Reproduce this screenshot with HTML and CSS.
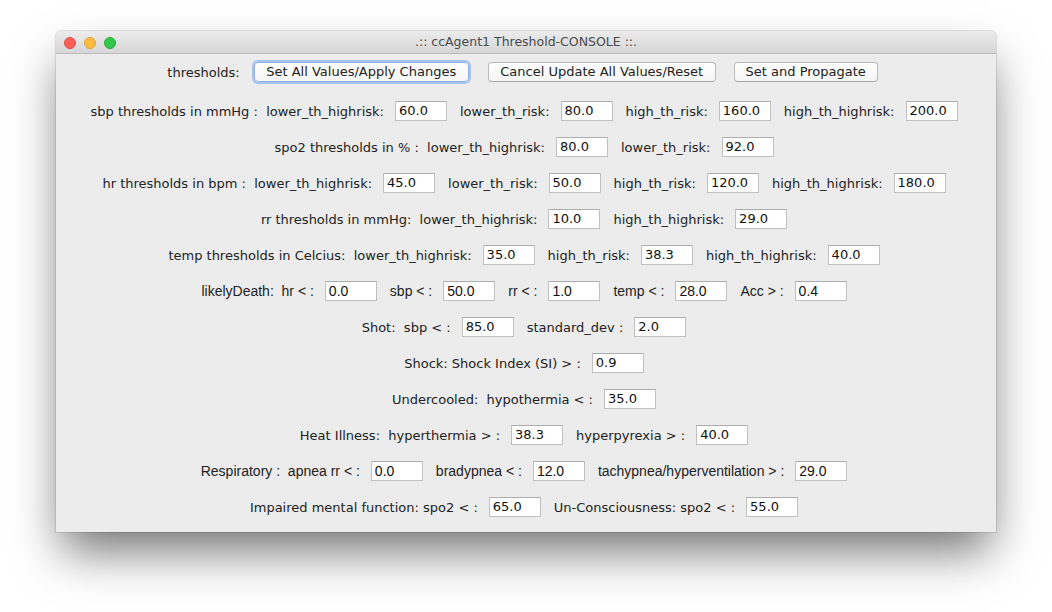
FILE: index.html
```html
<!DOCTYPE html>
<html>
<head>
<meta charset="utf-8">
<title>ccAgent1 Threshold-CONSOLE</title>
<link rel="stylesheet" href="styles.css">
</head>
<body>
<div class="window">
  <div class="titlebar">
    <div class="lights">
      <span class="light red"></span>
      <span class="light yellow"></span>
      <span class="light green"></span>
    </div>
    <div class="title">.:: ccAgent1 Threshold-CONSOLE ::.</div>
  </div>
  <div class="content">
    <div class="row first">
      <span class="lbl">thresholds:</span>
      <button class="btn focus b1">Set All Values/Apply Changes</button>
      <button class="btn b2">Cancel Update All Values/Reset</button>
      <button class="btn b3">Set and Propagate</button>
    </div>
    <div class="row">
      <span class="lbl">sbp thresholds in mmHg :  lower_th_highrisk:</span><span class="fld">60.0</span>
      <span class="lbl">lower_th_risk:</span><span class="fld">80.0</span>
      <span class="lbl">high_th_risk:</span><span class="fld">160.0</span>
      <span class="lbl">high_th_highrisk:</span><span class="fld">200.0</span>
    </div>
    <div class="row">
      <span class="lbl">spo2 thresholds in % :  lower_th_highrisk:</span><span class="fld">80.0</span>
      <span class="lbl">lower_th_risk:</span><span class="fld">92.0</span>
    </div>
    <div class="row">
      <span class="lbl">hr thresholds in bpm :  lower_th_highrisk:</span><span class="fld">45.0</span>
      <span class="lbl">lower_th_risk:</span><span class="fld">50.0</span>
      <span class="lbl">high_th_risk:</span><span class="fld">120.0</span>
      <span class="lbl">high_th_highrisk:</span><span class="fld">180.0</span>
    </div>
    <div class="row">
      <span class="lbl">rr thresholds in mmHg:  lower_th_highrisk:</span><span class="fld">10.0</span>
      <span class="lbl">high_th_highrisk:</span><span class="fld">29.0</span>
    </div>
    <div class="row">
      <span class="lbl">temp thresholds in Celcius:  lower_th_highrisk:</span><span class="fld">35.0</span>
      <span class="lbl">high_th_risk:</span><span class="fld">38.3</span>
      <span class="lbl">high_th_highrisk:</span><span class="fld">40.0</span>
    </div>
    <div class="row narrow">
      <span class="lbl">likelyDeath:  hr &lt; :</span><span class="fld">0.0</span>
      <span class="lbl">sbp &lt; :</span><span class="fld">50.0</span>
      <span class="lbl">rr &lt; :</span><span class="fld">1.0</span>
      <span class="lbl">temp &lt; :</span><span class="fld">28.0</span>
      <span class="lbl">Acc &gt; :</span><span class="fld">0.4</span>
    </div>
    <div class="row">
      <span class="lbl">Shot:  sbp &lt; :</span><span class="fld">85.0</span>
      <span class="lbl">standard_dev :</span><span class="fld">2.0</span>
    </div>
    <div class="row">
      <span class="lbl">Shock: Shock Index (SI) &gt; :</span><span class="fld">0.9</span>
    </div>
    <div class="row">
      <span class="lbl">Undercooled:  hypothermia &lt; :</span><span class="fld">35.0</span>
    </div>
    <div class="row">
      <span class="lbl">Heat Illness:  hyperthermia &gt; :</span><span class="fld">38.3</span>
      <span class="lbl">hyperpyrexia &gt; :</span><span class="fld">40.0</span>
    </div>
    <div class="row narrow">
      <span class="lbl">Respiratory :  apnea rr &lt; :</span><span class="fld">0.0</span>
      <span class="lbl">bradypnea &lt; :</span><span class="fld">12.0</span>
      <span class="lbl">tachypnea/hyperventilation &gt; :</span><span class="fld">29.0</span>
    </div>
    <div class="row">
      <span class="lbl">Impaired mental function: spo2 &lt; :</span><span class="fld">65.0</span>
      <span class="lbl">Un-Consciousness: spo2 &lt; :</span><span class="fld">55.0</span>
    </div>
  </div>
</div>
</body>
</html>
```
FILE: styles.css
```css
html, body {
  margin: 0;
  padding: 0;
  background: #ffffff;
}
body {
  width: 1052px;
  height: 612px;
  overflow: hidden;
  font-family: "DejaVu Sans", "Liberation Sans", sans-serif;
  font-size: 13px;
  color: #222222;
}
.window {
  margin: 31px 0 0 56px;
  width: 940px;
  height: 501px;
  background: #ececec;
  border-radius: 5px 5px 0 0;
  box-shadow: 0 0 0 1px rgba(0, 0, 0, 0.1), 0 25px 45px -6px rgba(0, 0, 0, 0.55);
  display: flex;
  flex-direction: column;
}
.titlebar {
  height: 22px;
  flex: none;
  border-radius: 5px 5px 0 0;
  background: linear-gradient(#ececec, #d6d6d6);
  border-bottom: 1px solid #bcbcbc;
  display: flex;
  align-items: center;
  position: relative;
}
.lights {
  display: flex;
  gap: 8px;
  position: absolute;
  left: 8px;
  top: 6px;
}
.light {
  width: 12px;
  height: 12px;
  border-radius: 50%;
  box-sizing: border-box;
}
.red { background: #fc605b; border: 1px solid #de4b44; }
.yellow { background: #fdbc40; border: 1px solid #dea236; }
.green { background: #34c84a; border: 1px solid #27aa35; }
.title {
  flex: 1;
  text-align: center;
  color: #4b4b4b;
  font-size: 12.5px;
  line-height: 22px;
}
.content {
  display: flex;
  flex-direction: column;
  padding-right: 4px;
}
.row {
  height: 36px;
  display: flex;
  align-items: center;
  justify-content: center;
}
.row.first {
  margin-bottom: 3px;
  padding-right: 3px;
}
.lbl {
  white-space: pre;
}
.fld {
  box-sizing: border-box;
  width: 52px;
  height: 20px;
  margin: 0 13px 0 11px;
  background: #ffffff;
  border: 1px solid #c0c0c0;
  border-top-color: #acacac;
  color: #111111;
  padding: 0 3px;
  line-height: 18px;
  white-space: pre;
}
.fld:last-child {
  margin-right: 0;
}
.narrow {
  font-family: "Liberation Sans", "DejaVu Sans", sans-serif;
  font-size: 14px;
}
.btn {
  box-sizing: border-box;
  height: 20px;
  font-family: inherit;
  font-size: 13px;
  line-height: 18px;
  color: #222222;
  background: linear-gradient(#ffffff, #f5f5f5);
  border: 1px solid #bababa;
  border-bottom-color: #a8a8a8;
  border-radius: 4px;
  padding: 0;
}
.btn.focus {
  border-color: #8db2e8;
  box-shadow: 0 0 0 2px rgba(120, 168, 236, 0.6);
}
.b1 { width: 215px; margin-left: 14px; }
.b2 { width: 228px; margin-left: 19px; }
.b3 { width: 144px; margin-left: 18px; }
```
